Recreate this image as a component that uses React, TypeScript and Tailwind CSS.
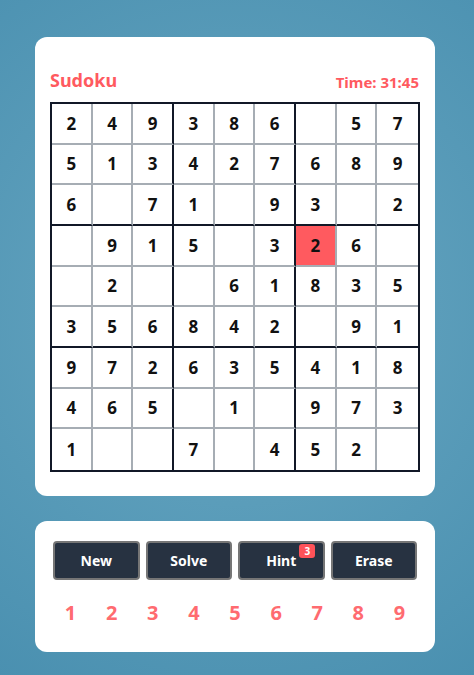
import React from "react";

const board: (number | null)[][] = [
  [2, 4, 9, 3, 8, 6, null, 5, 7],
  [5, 1, 3, 4, 2, 7, 6, 8, 9],
  [6, null, 7, 1, null, 9, 3, null, 2],
  [null, 9, 1, 5, null, 3, 2, 6, null],
  [null, 2, null, null, 6, 1, 8, 3, 5],
  [3, 5, 6, 8, 4, 2, null, 9, 1],
  [9, 7, 2, 6, 3, 5, 4, 1, 8],
  [4, 6, 5, null, 1, null, 9, 7, 3],
  [1, null, null, 7, null, 4, 5, 2, null],
];

function cellClass(r: number, c: number) {
  const parts = ["flex items-center justify-center text-[17px] font-bold text-[#111]"];
  if (c === 8) parts.push("border-r-0");
  else if (c === 2 || c === 5) parts.push("border-r-2 border-r-[#111827]");
  else parts.push("border-r-2 border-r-[#a6adb4]");
  if (r === 8) parts.push("border-b-0");
  else if (r === 2 || r === 5) parts.push("border-b-2 border-b-[#111827]");
  else parts.push("border-b-2 border-b-[#a6adb4]");
  if (r === 3 && c === 6) parts.push("bg-[#ff5a5f]");
  else parts.push("bg-white");
  return parts.join(" ");
}

export default function App() {
  return (
    <div
      className="min-h-[675px] w-full pt-[37px] pb-[25px] bg-[radial-gradient(circle_at_50%_45%,#6ba8c2_0%,#5b9dba_45%,#4a90b0_100%)]"
      style={{ fontFamily: '"Noto Sans", "Open Sans", sans-serif' }}
    >
      <div className="ml-[35px] w-[400px] rounded-[12px] bg-white px-[15px] pt-[30px] pb-[24px]">
        <div className="flex items-end justify-between h-[35px] pb-[10px]">
          <h1 className="text-[18px] leading-[24px] font-bold text-[#ff5a5f]">Sudoku</h1>
          <span className="text-[15px] leading-[20px] font-bold text-[#ff5a5f] mr-[1px]">Time: 31:45</span>
        </div>
        <div className="grid grid-cols-9 grid-rows-9 w-[370px] h-[370px] border-2 border-[#111827]">
          {board.map((row, r) =>
            row.map((v, c) => (
              <div key={`${r}-${c}`} className={cellClass(r, c)}>
                {v ?? ""}
              </div>
            ))
          )}
        </div>
      </div>

      <div className="ml-[35px] mt-[25px] w-[400px] rounded-[12px] bg-white px-[15px] pt-[20px] pb-[24px]">
        <div className="flex gap-[6px] px-[3px]">
          {["New", "Solve", "Hint", "Erase"].map((t) => (
            <button
              key={t}
              className="relative flex-1 h-[39px] rounded-[4px] border-2 border-[#767676] bg-[#273241] text-white text-[14px] font-bold"
            >
              {t === "Hint" ? (
                <span className="relative">
                  Hint
                  <span className="absolute -top-[7px] -right-[19px] flex h-[14px] w-[16px] items-center justify-center rounded-[3px] bg-[#ff5258] text-[10px] leading-none font-bold text-white">
                    3
                  </span>
                </span>
              ) : (
                t
              )}
            </button>
          ))}
        </div>
        <div className="grid grid-cols-9 w-[370px] mt-[18px] h-[30px] items-center">
          {[1, 2, 3, 4, 5, 6, 7, 8, 9].map((n) => (
            <div key={n} className="text-center text-[20px] font-bold text-[#ff6b70] leading-[30px]">
              {n}
            </div>
          ))}
        </div>
      </div>
    </div>
  );
}
